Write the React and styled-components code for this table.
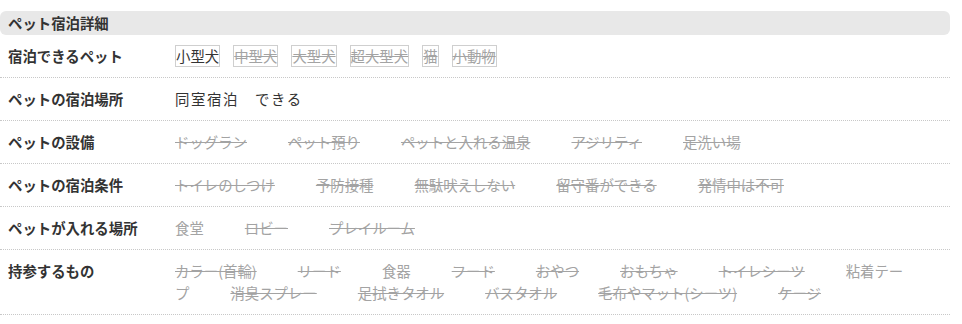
import React from 'react'
import styled, { createGlobalStyle } from 'styled-components'

const GlobalStyle = createGlobalStyle`
    body {
        margin: 0;
        background: #fff;
        font-family: "Noto Sans CJK JP", "Noto Sans", sans-serif;
        color: #333;
    }
`

const Wrapper = styled.section`
    width: 950px;
    margin-top: 11px;
    font-size: 14.4px;
`

const Heading = styled.h2`
    margin: 0;
    height: 24px;
    line-height: 24px;
    padding-left: 8px;
    background-color: #e8e8e8;
    border-radius: 6px;
    font-size: 14.4px;
    font-weight: 700;
    color: #333;
`

const Row = styled.div`
    display: flex;
    align-items: flex-start;
    padding: 10px 0 10px 8px;
    line-height: 22px;
    border-bottom: 1px dotted #c8c8c8;
`

const Label = styled.div`
    flex: 0 0 167px;
    font-weight: 700;
    color: #333;
`

const Values = styled.div`
    width: 731px;
    color: #333;
    letter-spacing: ${({ $spaced }) => ($spaced ? '1.6px' : '0')};
`

const Item = styled.span`
    margin-right: 41px;
    color: ${({ $on }) => ($on ? '#333' : '#a3a3a3')};
    text-decoration: ${({ $off }) => ($off ? 'line-through' : 'none')};
`

const Tag = styled.span`
    display: inline-block;
    margin-right: 13px;
    padding: 0;
    line-height: 20px;
    border: 1px solid #cfcfcf;
    color: ${({ $on }) => ($on ? '#333' : '#a3a3a3')};
    text-decoration: ${({ $on }) => ($on ? 'none' : 'line-through')};
`

const pets = [
    { name: '小型犬', on: true },
    { name: '中型犬' },
    { name: '大型犬' },
    { name: '超大型犬' },
    { name: '猫' },
    { name: '小動物' },
]

const rows = [
    {
        label: 'ペットの設備',
        items: [
            { name: 'ドッグラン', off: true },
            { name: 'ペット預り', off: true },
            { name: 'ペットと入れる温泉', off: true },
            { name: 'アジリティ', off: true },
            { name: '足洗い場', off: true },
        ],
    },
    {
        label: 'ペットの宿泊条件',
        items: [
            { name: 'トイレのしつけ', off: true },
            { name: '予防接種', off: true },
            { name: '無駄吠えしない', off: true },
            { name: '留守番ができる', off: true },
            { name: '発情中は不可', off: true },
        ],
    },
    {
        label: 'ペットが入れる場所',
        items: [
            { name: '食堂' },
            { name: 'ロビー', off: true },
            { name: 'プレイルーム', off: true },
        ],
    },
    {
        label: '持参するもの',
        items: [
            { name: 'カラー(首輪)', off: true },
            { name: 'リード', off: true },
            { name: '食器' },
            { name: 'フード', off: true },
            { name: 'おやつ', off: true },
            { name: 'おもちゃ', off: true },
            { name: 'トイレシーツ', off: true },
            { name: '粘着テープ' },
            { name: '消臭スプレー', off: true },
            { name: '足拭きタオル', off: true },
            { name: 'バスタオル', off: true },
            { name: '毛布やマット(シーツ)', off: true },
            { name: 'ケージ', off: true },
        ],
    },
]

const PetDetail = () => {
    return (
        <Wrapper>
            <Heading>ペット宿泊詳細</Heading>
            <Row>
                <Label>宿泊できるペット</Label>
                <Values>
                    {pets.map((p) => (
                        <Tag key={p.name} $on={p.on}>{p.name}</Tag>
                    ))}
                </Values>
            </Row>
            <Row>
                <Label>ペットの宿泊場所</Label>
                <Values $spaced>同室宿泊　できる</Values>
            </Row>
            {rows.map((r) => (
                <Row key={r.label}>
                    <Label>{r.label}</Label>
                    <Values>
                        {r.items.map((it) => (
                            <Item key={it.name} $off={it.off}>{it.name}</Item>
                        ))}
                    </Values>
                </Row>
            ))}
        </Wrapper>
    )
}

const App = () => (
    <>
        <GlobalStyle />
        <PetDetail />
    </>
)

export default App
